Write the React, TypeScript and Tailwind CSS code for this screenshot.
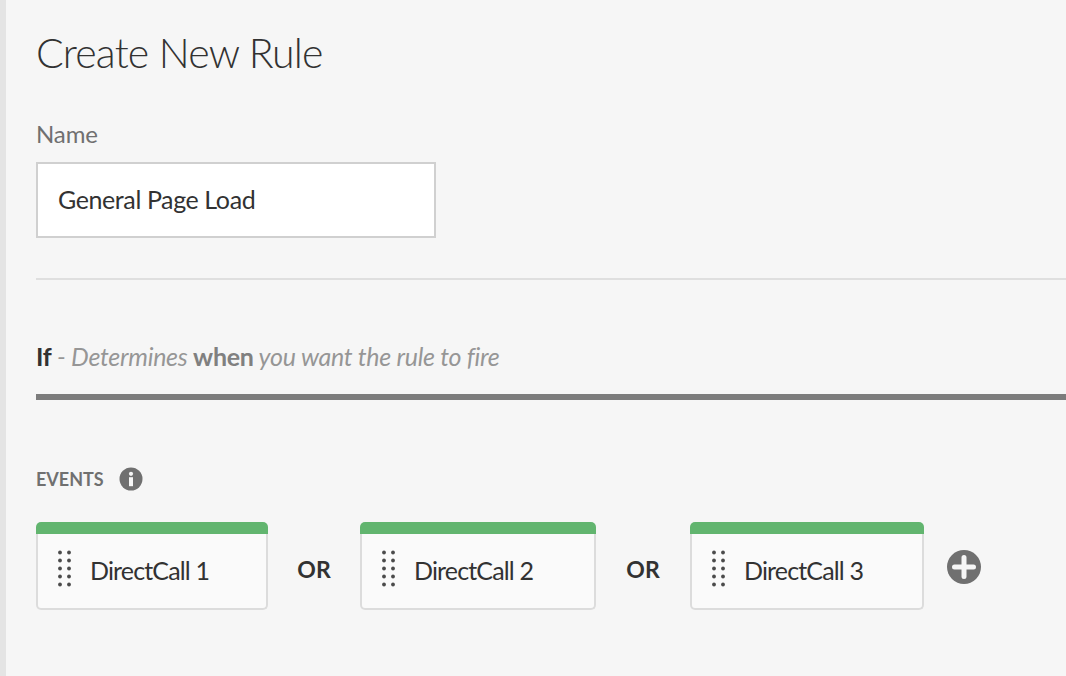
const FONT = "font-['Lato','Open_Sans',sans-serif]";

const Grip = () => (
  <svg width="14" height="37" viewBox="0 0 14 37" className="-mt-[4px] shrink-0 fill-[#4b4b4b]">
    {[2.5, 10.5, 18.5, 26.5, 34.5].flatMap((y) =>
      [2, 11].map((x) => <circle key={`${x}-${y}`} cx={x} cy={y} r="1.9" />)
    )}
  </svg>
);

const EventCard = ({ label, width }: { label: string; width: string }) => (
  <div className={`${width} h-[88px] shrink-0 rounded-[5px] bg-[#fafafa]`}>
    <div className="h-3 rounded-t-[5px] bg-[#62b56f]" />
    <div className="flex h-[76px] items-center gap-[18px] rounded-b-[5px] border-2 border-t-0 border-[#dcdcdc] pb-[1px] pl-[20px]">
      <Grip />
      <span className="text-[25px] leading-none tracking-[-0.85px] text-[#323232]">{label}</span>
    </div>
  </div>
);

const OrLabel = ({ width }: { width: string }) => (
  <div className={`${width} mt-[6px] shrink-0 text-center text-[23px] font-bold leading-none text-[#323232]`}>OR</div>
);

export default function App() {
  return (
    <div className={`flex h-[676px] w-[1066px] overflow-hidden bg-[#f6f6f6] ${FONT}`}>
      <div className="w-[6px] shrink-0 bg-[#e4e4e4]" />
      <main className="min-w-0 flex-1 pl-[30px]">
        <h1 className="pt-[29px] text-[41px] font-light leading-[48px] tracking-[-0.8px] text-[#323232]">Create New Rule</h1>
        <label className="mt-[43px] block text-[24px] leading-[28px] tracking-[-0.1px] text-[#707070]">Name</label>
        <div className="mt-[14px] flex h-[76px] w-[400px] items-center border-2 border-[#d0d0d0] bg-white pl-[20px] text-[25px] tracking-[-0.4px] text-[#323232]">
          General Page Load
        </div>
        <hr className="mt-[40px] border-0 border-t-2 border-[#dfdfdf]" />
        <p className="mt-[61px] text-[25px] italic leading-[30px] tracking-[-0.28px] text-[#969696]">
          <b className="not-italic text-[#323232]">If</b> - Determines <b className="not-italic text-[#808080]">when</b> you want the rule to fire
        </p>
        <div className="mt-[23px] h-[6px] bg-[#7c7c7c]" />
        <div className="mt-[67px] flex items-center gap-[15px]">
          <span className="text-[18px] font-bold leading-[24px] text-[#707070]">EVENTS</span>
          <svg width="24" height="24" viewBox="0 0 24 24">
            <circle cx="12" cy="12" r="11.5" fill="#707070" />
            <circle cx="12" cy="6.8" r="2.1" fill="#f6f6f6" />
            <rect x="10" y="10.2" width="4" height="9" fill="#f6f6f6" />
          </svg>
        </div>
        <div className="mt-[31px] flex items-center">
          <EventCard label="DirectCall 1" width="w-[232px]" />
          <OrLabel width="w-[92px]" />
          <EventCard label="DirectCall 2" width="w-[236px]" />
          <OrLabel width="w-[94px]" />
          <EventCard label="DirectCall 3" width="w-[234px]" />
          <svg width="36" height="36" viewBox="0 0 36 36" className="ml-[22px] mt-[2px] shrink-0">
            <circle cx="18" cy="18" r="17" fill="#707070" />
            <path d="M18 8.5v19M8.5 18h19" stroke="#f6f6f6" strokeWidth="5" strokeLinecap="round" />
          </svg>
        </div>
      </main>
    </div>
  );
}
